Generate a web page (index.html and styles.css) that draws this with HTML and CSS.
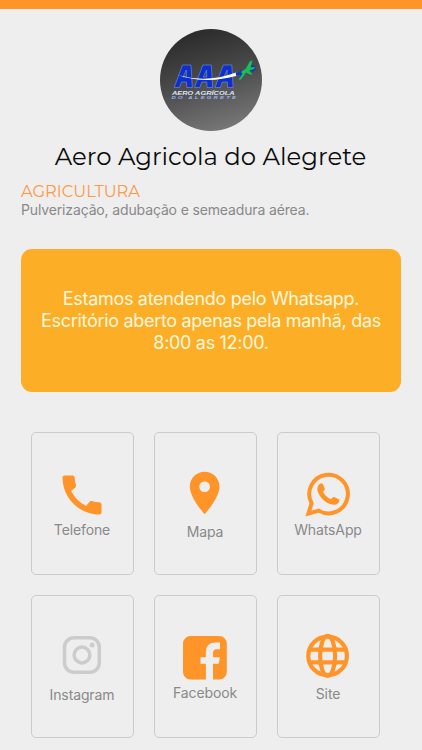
FILE: index.html
```html
<!DOCTYPE html>
<html lang="pt-BR">
<head>
<meta charset="utf-8">
<title>Aero Agricola do Alegrete</title>
<link rel="stylesheet" href="styles.css">
</head>
<body>
<div class="topbar"></div>
<header class="profile">
  <svg class="logo" viewBox="0 0 102 102">
    <defs>
      <linearGradient id="bg" x1="0.3" y1="0" x2="0.6" y2="1">
        <stop offset="0" stop-color="#292929"/><stop offset="0.5" stop-color="#4b4b4b"/><stop offset="1" stop-color="#777"/>
      </linearGradient>
    </defs>
    <circle cx="51" cy="51" r="51" fill="url(#bg)"/>
    <g fill="#0c30cf" stroke="#8ba5dc" stroke-width="0.5" fill-rule="evenodd">
      <path id="a" d="M14.200 58.500 22.500 36H31L32.300 58.500H26.700L26.500 53H21.500L19.500 58.500ZM23 48H26.500L26.300 41Z"/>
      <use href="#a" x="20.300"/>
      <use href="#a" x="40.800"/>
    </g>
    <path d="M17.500 46Q47 54.500 76 43.500L77 46.800Q46 55.500 17.500 46Z" fill="#fff"/>
    <path d="M75.500 44 82 42 84.500 44.500 76.500 47ZM91 37 94 36 96 39.500 93 43 90 41ZM80 45 83 44 83 48 80 48ZM79 40.500 82 41 81 43Z" fill="#1638b8"/>
    <path d="M81 43 86 39.500 90 32 92.500 31.500 90.500 38.500 95 38 94 40 89 41.500 92.500 45.500 90 45.500 86 43.500 81 50.500 78.500 51 82.500 44.500Z" fill="#12c458"/>
    <g fill="#dce5fa" font-family="Liberation Sans, sans-serif" font-weight="bold" font-style="italic">
      <text x="12" y="66" font-size="5.800" textLength="62.500" lengthAdjust="spacingAndGlyphs">AERO AGRÍCOLA</text>
      <g transform="translate(11.500 70.400) scale(1.500 1)"><text font-size="4" textLength="43" fill="#9bb4f4">DO ALEGRETE</text></g>
    </g>
  </svg>
  <h1 class="name">Aero Agricola do Alegrete</h1>
  <div class="category">AGRICULTURA</div>
  <p class="about">Pulverização, adubação e semeadura aérea.</p>
</header>
<section class="notice">
  <p>Estamos atendendo pelo Whatsapp.<br>Escritório aberto apenas pela manhã, das<br>8:00 as 12:00.</p>
</section>
<main class="actions">
  <a class="card">
    <svg viewBox="0 0 52 52"><path transform="scale(2.1667)" d="M20.010 15.380c-1.230 0-2.420-.2-3.530-.56-.35-.12-.74-.03-1.010.24l-1.570 1.970c-2.830-1.350-5.480-3.900-6.890-6.830l1.950-1.660c.27-.28.35-.67.24-1.020-.37-1.110-.56-2.300-.56-3.530 0-.54-.45-.99-.99-.99H4.190C3.650 3 3 3.240 3 3.990 3 13.280 10.730 21 20.010 21c.71 0 .99-.63.99-1.180v-3.450c0-.54-.45-.99-.99-.99z"/></svg>
    <span class="label">Telefone</span>
  </a>
  <a class="card">
    <svg viewBox="0 0 52 52"><path transform="translate(0.200 -1.400) scale(2.120)" d="M12 2C8.130 2 5 5.130 5 9c0 5.250 7 13 7 13s7-7.750 7-13c0-3.870-3.130-7-7-7zm0 9.500c-1.380 0-2.500-1.120-2.500-2.500s1.120-2.500 2.500-2.500 2.500 1.120 2.500 2.500-1.120 2.500-2.500 2.500z"/></svg>
    <span class="label low">Mapa</span>
  </a>
  <a class="card">
    <svg viewBox="0.6 0 52 52">
      <path d="M7 44.600 10.200 34.200A19.300 19.300 0 1 1 17.300 41.600Z" fill="none" stroke="currentColor" stroke-width="4" stroke-miterlimit="8"/>
      <path d="M18.200 14.900c.8-.7 2.600-.9 3.200.1l2.100 4.800c.3 1-1.700 2.500-1.700 3.300 1.500 3.200 4 5.400 7.400 6.900 1 0 2.400-2.200 3.500-1.900l4.800 2.200c.8.600.3 2.700-.6 3.600-2.100 2-4.700 2.200-7 1.400-5.900-1.600-10.700-6.200-12.900-11.400-1.600-3.300-1.300-6.900 1.200-9z"/>
    </svg>
    <span class="label">WhatsApp</span>
  </a>
  <a class="card off">
    <svg viewBox="0 0 52 52">
      <g fill="none" stroke="currentColor" stroke-width="3.500"><rect x="8.500" y="5.800" width="34.800" height="34.500" rx="9.500"/><circle cx="26" cy="23" r="7.900"/></g>
      <circle cx="36.200" cy="12.900" r="2.500"/>
    </svg>
    <span class="label low">Instagram</span>
  </a>
  <a class="card">
    <svg viewBox="0 0 52 52"><path d="M11.500 4H40.300A7.500 7.500 0 0 1 47.800 11.500V40A7.500 7.500 0 0 1 40.300 47.500H34V31.800H39.700L40.900 25.200H34V21Q34 17.200 37.500 17.200H41V10.500H36.500Q26.900 10.500 26.900 20V25.200H21.500V31.800H26.900V47.500H11.500A7.500 7.500 0 0 1 4 40V11.500A7.500 7.500 0 0 1 11.500 4Z"/></svg>
    <span class="label">Facebook</span>
  </a>
  <a class="card">
    <svg viewBox="0 0 52 52"><g fill="none" stroke="currentColor" stroke-width="4.200"><circle cx="25.600" cy="23.900" r="19.300"/><ellipse cx="25.600" cy="23.900" rx="7.500" ry="20"/><path d="M8.500 17.600H42.700M8.500 30.400H42.700"/></g></svg>
    <span class="label mid">Site</span>
  </a>
</main>
</body>
</html>
```
FILE: styles.css
```css
* { box-sizing: border-box; }
body {
  margin: 0;
  height: 750px;
  overflow: hidden;
  background: #eee;
  font-family: Inter, "Liberation Sans", sans-serif;
  color: #898989;
}
.topbar { height: 9px; background: #ff9529; }
.profile { padding: 20px 21px 0; }
.logo { display: block; width: 102px; height: 102px; margin: 0 auto; }
.name {
  margin: 7px -1px 0 -2px;
  font-family: Montserrat, Inter, sans-serif;
  font-size: 24.400px;
  line-height: 36px;
  font-weight: 400;
  text-align: center;
  white-space: nowrap;
  color: #0c0c0c;
}
.category {
  margin-top: 7px;
  font-family: Montserrat, Inter, sans-serif;
  font-size: 16.300px;
  line-height: 20px;
  font-weight: 400;
  color: #ff9845;
}
.about {
  margin: -1px 0 0;
  font-size: 14px;
  line-height: 19px;
  letter-spacing: -0.14px;
  white-space: nowrap;
}
.notice {
  display: flex;
  align-items: center;
  justify-content: center;
  height: 143px;
  margin: 30px 21px 0;
  border-radius: 11px;
  background: #fdae27;
  color: #fff8df;
  text-align: center;
}
.notice p {
  margin: 0;
  font-size: 18px;
  line-height: 22px;
  letter-spacing: -0.31px;
  white-space: nowrap;
}
.actions {
  display: grid;
  grid-template-columns: repeat(3, 103px);
  column-gap: 20px;
  row-gap: 20px;
  padding: 40px 0 0 30.500px;
}
.card {
  display: flex;
  flex-direction: column;
  align-items: center;
  height: 143px;
  padding-top: 36px;
  border: 1px solid #cbcbcb;
  border-radius: 5px;
  color: #ff9529;
}
.off { color: #ccc; }
.card svg { width: 52px; height: 52px; fill: currentColor; }
.label {
  margin-top: -1px;
  font-size: 14px;
  line-height: 20px;
  letter-spacing: -0.12px;
  color: #898989;
}
.low { margin-top: 1px; }
.mid { margin-top: 0; }
```
